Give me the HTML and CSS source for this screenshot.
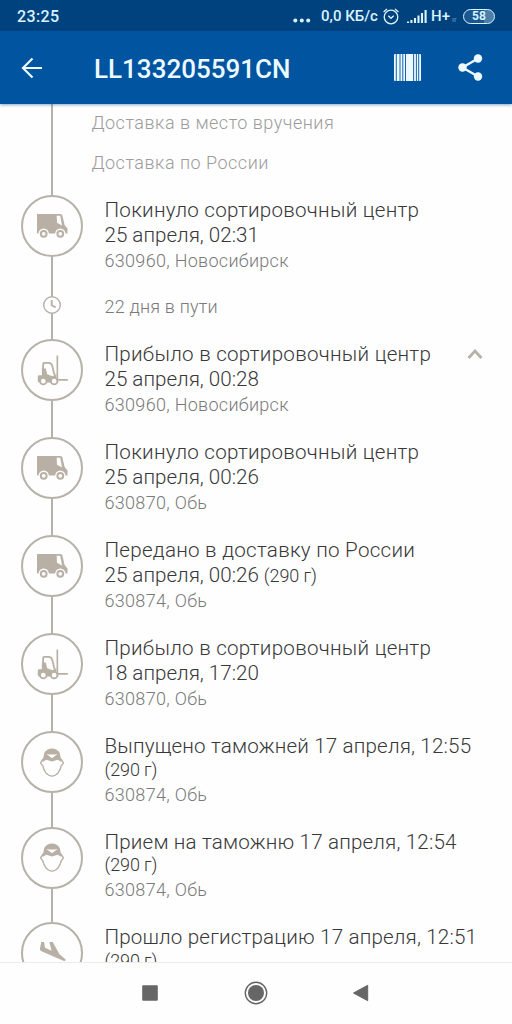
FILE: index.html
```html
<!DOCTYPE html>
<html lang="ru">
<head>
<meta charset="utf-8">
<title>LL133205591CN</title>
<link rel="stylesheet" href="styles.css">
</head>
<body>
<svg class="defs" aria-hidden="true">
  <symbol id="truck" viewBox="0 0 32 26">
    <path fill="currentColor" d="M1 1H24.5Q26 1 26.4 2.5L28.6 12L31.5 15.5V20.5H1Z"/>
    <path fill="#fefefe" d="M20.7 2.8H24.2L26 12.5L21 9.8Z"/>
    <circle cx="7.7" cy="20.8" r="5.2" fill="#fefefe"/><circle cx="24.3" cy="20.8" r="5.2" fill="#fefefe"/>
    <circle cx="7.7" cy="20.8" r="2.9" fill="none" stroke="currentColor" stroke-width="2"/>
    <circle cx="24.3" cy="20.8" r="2.9" fill="none" stroke="currentColor" stroke-width="2"/>
  </symbol>
  <symbol id="forklift" viewBox="0 0 32 32">
    <path fill="none" stroke="currentColor" stroke-width="1.9" d="M6.3 21V10Q6.3 8.6 7.7 8.6H12Q14.7 8.6 15.7 11.5L18 21"/>
    <path fill="currentColor" d="M.8 23Q.8 21.5 2.3 21.5H5V14.5H9L10.5 20.5L16 22.5L20 20V27.5Q20 29 18 29H3Q.8 29 .8 27Z"/>
    <path fill="none" stroke="currentColor" stroke-width="1.7" d="M21 1V29M21 26.2H31.8"/>
    <circle cx="6.5" cy="27.5" r="3.4" fill="#fefefe" stroke="currentColor" stroke-width="1.9"/>
    <circle cx="17.7" cy="27.5" r="3.4" fill="#fefefe" stroke="currentColor" stroke-width="1.9"/>
  </symbol>
  <symbol id="officer" viewBox="0 0 28 32">
    <path fill="none" stroke="currentColor" stroke-width="1.5" stroke-linejoin="round" d="M4.5 12L1.7 16.5L4.2 20C5 25 9 30.7 14 30.7S23 25 23.8 20L26.3 16.5L23.5 12"/>
    <path fill="currentColor" d="M3.5 15.5L5.8 5.5Q9 1 14 1T22.2 5.5L24.5 15.5L20 13L14 15L8 13Z"/>
    <path fill="#fefefe" d="M8 6.8Q14 8 20 6.8L14 11.3Z"/>
  </symbol>
  <symbol id="plane" viewBox="0 0 28 22">
    <path fill="currentColor" d="M2.2 1H5.2L6.2 7.2L13 10.2L10.7 1H14.3L21.3 14L27.5 19Q28.5 21 26 21L2.5 10.8Q0.5 10 .8 8Z"/>
  </symbol>
</svg>
<div class="phone">
  <div class="status">
    <span class="time">23:25</span>
    <svg class="dots" viewBox="0 0 18 5"><circle cx="2.3" cy="2.5" r="2"/><circle cx="8.8" cy="2.5" r="2"/><circle cx="15.2" cy="2.5" r="2"/></svg>
    <span class="speed">0,0 КБ/с</span>
    <svg class="alarm" viewBox="0 0 16 17"><circle cx="8" cy="9" r="6.8"/><path d="M.6 4L4 1M12 1L15.4 4M5.3 7.7L8 10.3L10.7 7.7"/></svg>
    <svg class="signal" viewBox="0 0 20 15"><path d="M1 14V12.5M4.4 14V11M8 14V9M11.5 14V6.5M15 14V4M18.6 14V1"/></svg>
    <span class="net">H+</span>
    <span class="roam">ır</span>
    <span class="battery">58</span>
  </div>
  <header class="appbar">
    <svg class="back" viewBox="0 0 22 22"><path d="M21 11H2M11.5 1.5L2 11L11.5 20.5"/></svg>
    <h1 class="number">LL133205591CN</h1>
    <svg class="barcode" viewBox="0 0 27 27"><rect class="bg" width="27" height="27" rx="1"/><path d="M2.3 0V27M6 0V27M8.8 0V27M11.5 0V27M19.6 0V27M22.4 0V27M24.7 0V27"/></svg>
    <svg class="share" viewBox="0 0 25 27"><path d="M20 4.5L4.5 13.5L20 22.5"/><circle cx="20" cy="4.5" r="4.2"/><circle cx="4.5" cy="13.5" r="4.2"/><circle cx="20" cy="22.5" r="4.2"/></svg>
  </header>
  <main class="timeline">
    <div class="stages"><p class="stage">Доставка в место вручения</p><p class="stage">Доставка по России</p></div>
    <article class="event">
      <div class="node"><svg class="truck"><use href="#truck"/></svg></div>
      <div class="text"><p class="title">Покинуло сортировочный центр</p><p class="title date">25 апреля, 02:31</p><p class="place">630960, Новосибирск</p></div>
    </article>
    <div class="transit">
      <svg class="clock" viewBox="0 0 18 18"><circle cx="9" cy="9" r="8.3"/><path d="M8.7 4V9.3L12.7 11.5"/></svg>
      <p class="days">22 дня в пути</p>
    </div>
    <article class="event">
      <div class="node"><svg class="forklift"><use href="#forklift"/></svg></div>
      <div class="text"><p class="title">Прибыло в сортировочный центр</p><p class="title date">25 апреля, 00:28</p><p class="place">630960, Новосибирск</p></div>
      <svg class="chevron" viewBox="0 0 16 10"><path d="M1.5 9L8 2L14.5 9"/></svg>
    </article>
    <article class="event">
      <div class="node"><svg class="truck"><use href="#truck"/></svg></div>
      <div class="text"><p class="title">Покинуло сортировочный центр</p><p class="title date">25 апреля, 00:26</p><p class="place">630870, Обь</p></div>
    </article>
    <article class="event">
      <div class="node"><svg class="truck"><use href="#truck"/></svg></div>
      <div class="text"><p class="title">Передано в доставку по России</p><p class="title date">25 апреля, 00:26 <span class="weight">(290 г)</span></p><p class="place">630874, Обь</p></div>
    </article>
    <article class="event">
      <div class="node"><svg class="forklift"><use href="#forklift"/></svg></div>
      <div class="text"><p class="title">Прибыло в сортировочный центр</p><p class="title date">18 апреля, 17:20</p><p class="place">630870, Обь</p></div>
    </article>
    <article class="event short">
      <div class="node"><svg class="officer"><use href="#officer"/></svg></div>
      <div class="text"><p class="title mixed">Выпущено таможней 17 апреля, 12:55</p><p class="title second"><span class="weight">(290 г)</span></p><p class="place">630874, Обь</p></div>
    </article>
    <article class="event short">
      <div class="node"><svg class="officer"><use href="#officer"/></svg></div>
      <div class="text"><p class="title mixed">Прием на таможню 17 апреля, 12:54</p><p class="title second"><span class="weight">(290 г)</span></p><p class="place">630874, Обь</p></div>
    </article>
    <article class="event short">
      <div class="node"><svg class="plane"><use href="#plane"/></svg></div>
      <div class="text"><p class="title mixed">Прошло регистрацию 17 апреля, 12:51</p><p class="title second"><span class="weight">(290 г)</span></p></div>
    </article>
  </main>
  <nav class="nav">
    <svg viewBox="0 0 24 24"><rect x="4.2" y="4.2" width="15.6" height="15.6" rx="1"/></svg>
    <svg viewBox="0 0 24 24"><circle cx="12" cy="12" r="10.7" fill="none" stroke="#666" stroke-width="1.4"/><circle cx="12" cy="12" r="8"/></svg>
    <svg viewBox="0 0 24 24"><path d="M3.5 12L17.7 4.3V19.7Z" stroke="#666" stroke-linejoin="round"/></svg>
  </nav>
</div>
</body>
</html>
```
FILE: styles.css
```css
* { box-sizing: border-box; }
body, p, h1 { margin: 0; }
body { font-family: Roboto, "Noto Sans", sans-serif; background: #fefefe; }
.defs { position: absolute; width: 0; height: 0; }
svg { display: block; flex: none; }
.phone { width: 512px; height: 1024px; display: flex; flex-direction: column; overflow: hidden; }

.status { flex: none; height: 31px; background: #00427e; color: #d9f3ff; display: flex; align-items: center; padding: 1px 17px 0 17px; white-space: nowrap; }
.time { font-size: 16px; font-weight: 500; letter-spacing: .35px; margin-right: auto; }
.dots { width: 18px; height: 5px; fill: #d9f3ff; margin: 9px 10px 0 0; }
.speed { font-size: 15px; font-weight: 500; width: 57px; }
.alarm { width: 16px; height: 17px; margin: 0 8px 0 5px; fill: none; stroke: #d9f3ff; stroke-width: 1.3; }
.signal { width: 20px; height: 15px; margin-right: 4px; fill: none; stroke: #d9f3ff; stroke-width: 2.1; }
.net { font-size: 15px; font-weight: 500; width: 20px; }
.roam { font-size: 8px; width: 6px; margin: 6px 5px 0 1px; color: #6d9cc4; }
.battery { width: 32px; height: 15px; border: 1.5px solid #d9f3ff; border-radius: 8px; font-size: 12px; font-weight: 700; line-height: 13px; text-align: center; background: linear-gradient(90deg, #1c5890 68%, #4c7faa 68%); }

.appbar { flex: none; height: 73px; background: #0054a0; color: #ecfaff; display: flex; align-items: center; padding: 0 29px 0 21px; position: relative; box-shadow: 0 1px 3px #0054a080; }
.back { width: 22px; height: 22px; margin-right: 51px; fill: none; stroke: #ecfaff; stroke-width: 2.2; }
.number { font-size: 26px; font-weight: 500; flex: 1; line-height: 28px; padding-top: 2px; }
.barcode { width: 27px; height: 27px; margin-right: 37px; stroke: #0054a0; stroke-width: .9; }
.barcode .bg { fill: #ecfaff; stroke: none; }
.share { width: 25px; height: 27px; fill: #ecfaff; stroke: none; }
.share path { fill: none; stroke: #ecfaff; stroke-width: 2.4; }

.timeline { flex: none; height: 858.5px; overflow: hidden; border-bottom: 1px solid #ededed; font-weight: 300; white-space: nowrap; background: linear-gradient(#b6b2a9, #b6b2a9) 51px 0 / 2px 100% no-repeat; }
.stages { height: 91px; padding: 7px 0 0 91.5px; color: #9c9c9c; }
.stage { height: 40px; font-size: 18px; line-height: 24px; letter-spacing: .5px; }
.event { height: 98px; padding-left: 21px; display: flex; align-items: flex-start; }
.short { height: 95.5px; }
.node { flex: none; width: 62px; height: 62px; border: 2px solid #b6b2a9; border-radius: 50%; background: #fefefe; color: #b8b0a5; display: flex; align-items: center; justify-content: center; margin-right: 21.5px; }
.text { width: 372px; }
.title { height: 24.5px; font-size: 20.6px; line-height: 30px; color: #383838; letter-spacing: .26px; }
.title.date { letter-spacing: 0; }
.title.mixed { letter-spacing: .17px; }
.title.second { height: 22px; line-height: 27px; }
.weight { font-size: 18px; letter-spacing: -.1px; }
.place { font-size: 18px; line-height: 33px; color: #7a7a7a; letter-spacing: .3px; }
.truck { width: 32px; height: 26px; }
.forklift { width: 31px; height: 32px; }
.officer { width: 26px; height: 31px; }
.plane { width: 27px; height: 21px; margin-top: -4px; }
.chevron { width: 16px; height: 10px; margin: 10px 0 0 -9.5px; fill: none; stroke: #b6b2a9; stroke-width: 2.8; }
.transit { height: 46px; padding-left: 43px; display: flex; align-items: flex-start; }
.clock { width: 18px; height: 18px; margin: 3px 43.5px 0 0; fill: #fefefe; stroke: #b6b2a9; stroke-width: 1.4; }
.clock path { fill: none; stroke-width: 1.9; }
.days { font-size: 18px; line-height: 27px; color: #7a7a7a; letter-spacing: .2px; }

.nav { flex: 1; display: flex; align-items: center; justify-content: center; gap: 82px; }
.nav svg { width: 24px; height: 24px; fill: #666; }
```
